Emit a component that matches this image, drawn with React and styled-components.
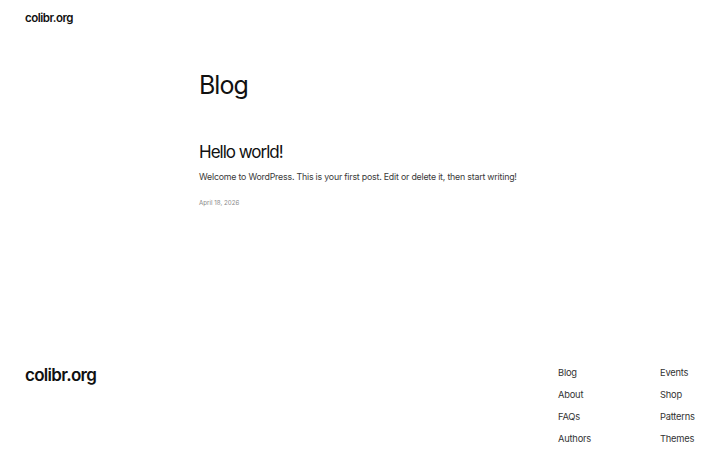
import React from 'react';
import styled, { createGlobalStyle } from 'styled-components';

const GlobalStyle = createGlobalStyle`
  html, body {
    margin: 0;
    padding: 0;
    background: #ffffff;
  }

  body {
    font-family: Inter, 'Noto Sans', sans-serif;
    color: #111111;
    -webkit-font-smoothing: antialiased;
  }
`;

const Page = styled.div`
  width: 720px;
  height: 450px;
  display: flex;
  flex-direction: column;
  overflow: hidden;
`;

const Header = styled.header`
  display: flex;
  align-items: center;
  height: 35px;
  padding: 0 25px;
`;

const SiteTitle = styled.a`
  font-size: ${(props) => (props.large ? '17px' : '11.5px')};
  font-weight: 600;
  letter-spacing: ${(props) => (props.large ? '-0.7px' : '-0.5px')};
  color: #111111;
  text-decoration: none;
`;

const Main = styled.main`
  width: 322px;
  margin: 0 auto;
  flex: 1;
`;

const PageTitle = styled.h1`
  margin: 34px 0 0;
  font-size: 25px;
  font-weight: 400;
  line-height: 32px;
  letter-spacing: -1px;
`;

const Post = styled.article`
  margin-top: 40px;
`;

const PostTitle = styled.h2`
  margin: 0;
  font-size: 17px;
  font-weight: 400;
  line-height: 22px;
  letter-spacing: -1px;
`;

const Excerpt = styled.p`
  margin: 7px 0 0;
  font-size: 8.8px;
  line-height: 14px;
  color: #3a3a3a;
  letter-spacing: -0.2px;
  white-space: nowrap;
`;

const PostDate = styled.time`
  display: block;
  margin-top: 13px;
  font-size: 6.2px;
  line-height: 12px;
  color: #8a8a8a;
`;

const FooterBar = styled.footer`
  display: flex;
  justify-content: space-between;
  align-items: flex-start;
  padding: 7px 25px 0;
  height: 85px;
`;

const FooterNav = styled.nav`
  display: grid;
  grid-template-columns: 102px 35px;
  margin-top: 1px;
`;

const NavColumn = styled.ul`
  list-style: none;
  margin: 0;
  padding: 0;
  display: flex;
  flex-direction: column;
  gap: 8px;
`;

const NavLink = styled.a`
  display: block;
  font-size: 9.3px;
  line-height: 14px;
  letter-spacing: -0.2px;
  color: #333333;
  text-decoration: none;
  white-space: nowrap;
`;

const firstColumn = ['Blog', 'About', 'FAQs', 'Authors'];
const secondColumn = ['Events', 'Shop', 'Patterns', 'Themes'];

function App() {
  return (
    <Page>
      <GlobalStyle />
      <Header>
        <SiteTitle href="#">colibr.org</SiteTitle>
      </Header>

      <Main>
        <PageTitle>Blog</PageTitle>
        <Post>
          <PostTitle>Hello world!</PostTitle>
          <Excerpt>
            Welcome to WordPress. This is your first post. Edit or delete it, then start writing!
          </Excerpt>
          <PostDate>April 18, 2026</PostDate>
        </Post>
      </Main>

      <FooterBar>
        <SiteTitle href="#" large>colibr.org</SiteTitle>
        <FooterNav>
          <NavColumn>
            {firstColumn.map((item) => (
              <li key={item}>
                <NavLink href="#">{item}</NavLink>
              </li>
            ))}
          </NavColumn>
          <NavColumn>
            {secondColumn.map((item) => (
              <li key={item}>
                <NavLink href="#">{item}</NavLink>
              </li>
            ))}
          </NavColumn>
        </FooterNav>
      </FooterBar>
    </Page>
  );
}

export default App;
